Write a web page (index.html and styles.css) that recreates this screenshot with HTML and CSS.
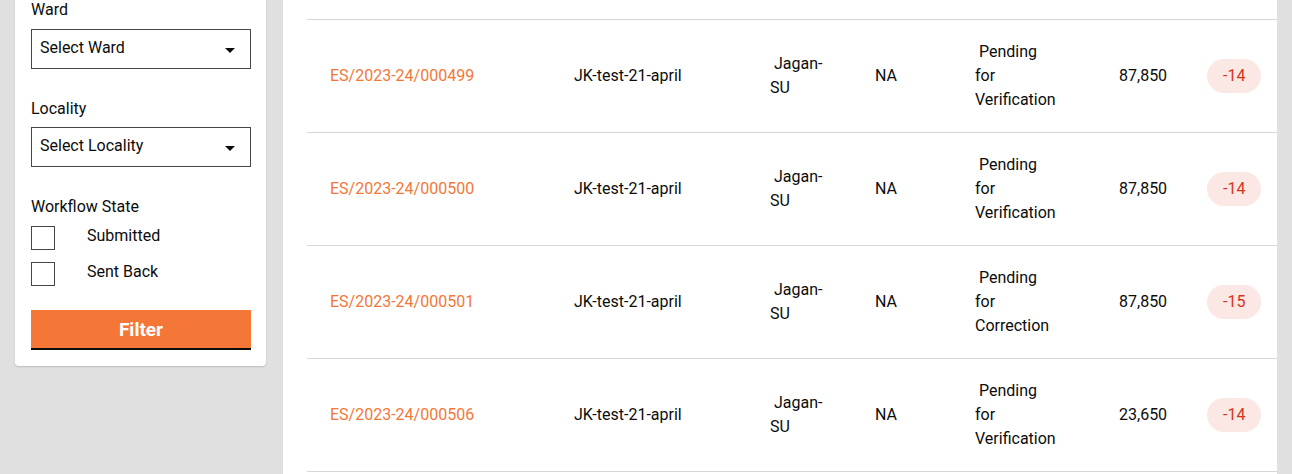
FILE: index.html
```html
<!DOCTYPE html>
<html>
<head>
<meta charset="utf-8">
<link rel="stylesheet" href="styles.css">
</head>
<body>
<div class="page">
  <aside class="filters">
    <div class="field">
      <label class="label">Ward</label>
      <div class="select"><span>Select Ward</span><span class="caret"></span></div>
    </div>
    <div class="field">
      <label class="label">Locality</label>
      <div class="select"><span>Select Locality</span><span class="caret"></span></div>
    </div>
    <div class="field">
      <label class="label">Workflow State</label>
      <div class="checks">
        <div class="check"><span class="box"></span><span class="check-text">Submitted</span></div>
        <div class="check"><span class="box"></span><span class="check-text">Sent Back</span></div>
      </div>
    </div>
    <button class="filter-btn">Filter</button>
  </aside>
  <main class="results">
    <div class="top-gap"></div>
    <table class="grid">
      <colgroup>
        <col class="c1"><col class="c2"><col class="c3"><col class="c4"><col class="c5"><col class="c6"><col class="c7">
      </colgroup>
      <tbody>
        <tr>
          <td><a class="link">ES/2023-24/000499</a></td>
          <td>JK-test-21-april</td>
          <td class="narrow">&nbsp;Jagan-SU</td>
          <td>NA</td>
          <td class="status">&nbsp;Pending for Verification</td>
          <td>87,850</td>
          <td><span class="badge">-14</span></td>
        </tr>
        <tr>
          <td><a class="link">ES/2023-24/000500</a></td>
          <td>JK-test-21-april</td>
          <td class="narrow">&nbsp;Jagan-SU</td>
          <td>NA</td>
          <td class="status">&nbsp;Pending for Verification</td>
          <td>87,850</td>
          <td><span class="badge">-14</span></td>
        </tr>
        <tr>
          <td><a class="link">ES/2023-24/000501</a></td>
          <td>JK-test-21-april</td>
          <td class="narrow">&nbsp;Jagan-SU</td>
          <td>NA</td>
          <td class="status">&nbsp;Pending for Correction</td>
          <td>87,850</td>
          <td><span class="badge">-15</span></td>
        </tr>
        <tr>
          <td><a class="link">ES/2023-24/000506</a></td>
          <td>JK-test-21-april</td>
          <td class="narrow">&nbsp;Jagan-SU</td>
          <td>NA</td>
          <td class="status">&nbsp;Pending for Verification</td>
          <td>23,650</td>
          <td><span class="badge">-14</span></td>
        </tr>
      </tbody>
    </table>
  </main>
</div>
</body>
</html>
```

FILE: styles.css
```css
* { box-sizing: border-box; }
html, body { margin: 0; padding: 0; }
body {
  background: #e0e0e0;
  font-family: Roboto, "Liberation Sans", sans-serif;
  font-size: 16px;
  color: #0b0c0c;
  height: 474px;
  overflow: hidden;
}
.page {
  display: flex;
  align-items: flex-start;
  padding-left: 15px;
  height: 474px;
}
.filters {
  width: 251px;
  background: #fff;
  margin-top: -11px;
  padding: 8px 15px 16px 16px;
  border-radius: 0 0 4px 4px;
  box-shadow: 0 1px 2px rgba(0,0,0,0.16);
  display: flex;
  flex-direction: column;
}
.field { display: flex; flex-direction: column; margin-bottom: 27px; }
.field:nth-child(3) { margin-bottom: 24px; }
.label { line-height: 24px; margin-bottom: 8px; position: relative; top: 1px; }
.field:nth-child(2) .label { margin-bottom: 7px; }
.select {
  height: 40px;
  border: 1px solid #464646;
  display: flex;
  align-items: center;
  justify-content: space-between;
  padding: 0 15px 0 8px;
  line-height: 24px;
}
.select span:first-child { position: relative; top: -1px; }
.caret {
  width: 0; height: 0;
  border-left: 5px solid transparent;
  border-right: 5px solid transparent;
  border-top: 5px solid #0b0c0c;
  margin-top: 2px;
}
.checks { display: flex; flex-direction: column; gap: 12px; }
.check { display: flex; align-items: flex-start; height: 24px; }
.box {
  width: 24px; height: 24px;
  border: 1px solid #464646;
  flex: none;
}
.check-text { margin-left: 32px; line-height: 18px; padding-top: 1px; }
.filter-btn {
  height: 40px;
  width: 220px;
  background: #f47738;
  color: #fff;
  border: 0;
  border-bottom: 2px solid #0b0c0c;
  font-family: Roboto, "Liberation Sans", sans-serif;
  font-size: 19px;
  font-weight: 700;
  padding: 0;
}
.results {
  margin-left: 17px;
  width: 994px;
  height: 474px;
  background: #fff;
  padding-left: 24px;
}
.top-gap { height: 19px; }
.grid {
  border-collapse: collapse;
  table-layout: fixed;
  width: 970px;
}
.c1 { width: 244px; }
.c2 { width: 196px; }
.c3 { width: 105px; }
.c4 { width: 100px; }
.c5 { width: 144px; }
.c6 { width: 88px; }
.c7 { width: 93px; }
.grid tr { border-top: 1px solid #d6d6d6; }
.grid tr:last-child { border-bottom: 1px solid #d6d6d6; }
.grid td {
  height: 112px;
  padding: 20px 0 20px 23px;
  line-height: 24px;
  vertical-align: middle;
}
.grid td.narrow { padding-right: 22px; }
.grid td.status { padding-right: 39px; }
.link { color: #f47738; text-decoration: none; }
.badge {
  display: inline-block;
  background: #fbe7e4;
  color: #d4351c;
  border-radius: 17px;
  height: 34px;
  line-height: 34px;
  padding: 0 16px;
}
```
